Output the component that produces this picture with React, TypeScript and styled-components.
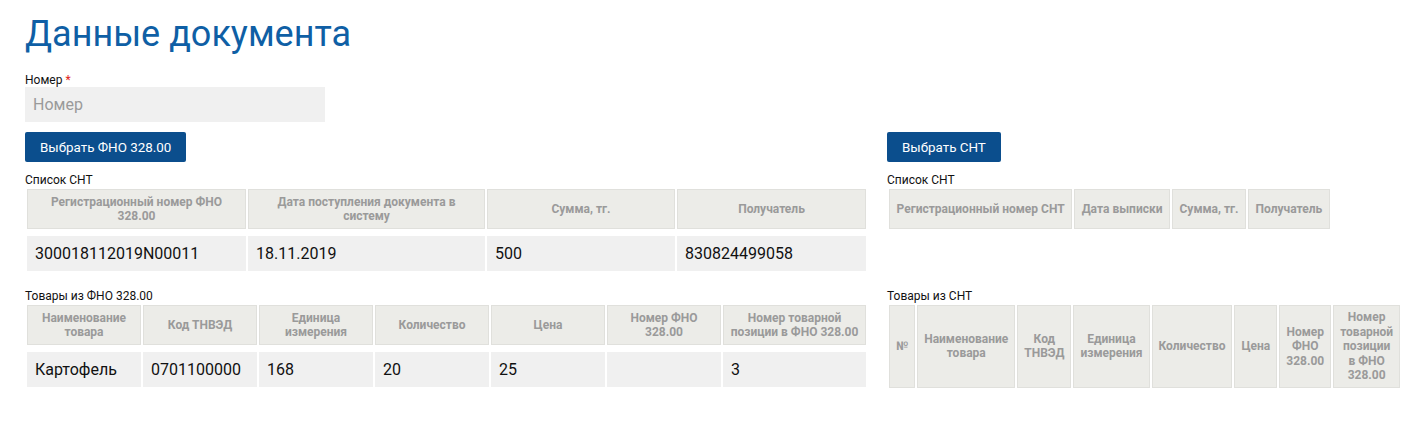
import React from "react";
import styled, { createGlobalStyle } from "styled-components";

const GlobalStyle = createGlobalStyle`
  html, body {
    margin: 0;
    padding: 0;
    background: #fff;
  }
  body {
    font-family: Roboto, "Liberation Sans", Arial, sans-serif;
    color: #000;
  }
`;

const Page = styled.div`
  padding: 13px 5px 20px 25px;
  width: 1410px;
  box-sizing: border-box;
`;

const Title = styled.h1`
  margin: 0 0 18px;
  font-size: 36px;
  font-weight: 400;
  line-height: 42px;
  color: #0f5fa5;
`;

const Label = styled.div`
  font-size: 12px;
  line-height: 14px;
  color: #111;
`;

const Required = styled.span`
  color: #e0231c;
`;

const TextInput = styled.input`
  display: block;
  width: 300px;
  height: 35px;
  box-sizing: border-box;
  border: none;
  outline: none;
  background: #f0f0f0;
  padding: 0 8px;
  font-family: inherit;
  font-size: 16px;
  color: #333;

  &::placeholder {
    color: #9a9a9a;
  }
`;

const Columns = styled.div`
  display: grid;
  grid-template-columns: 842px 518px;
  column-gap: 20px;
  row-gap: 16px;
  margin-top: 10px;
`;

const Section = styled.div`
  display: flex;
  flex-direction: column;
  align-items: flex-start;
`;

const Button = styled.button`
  height: 30px;
  padding: 0 15px;
  margin-bottom: 11px;
  border: none;
  border-radius: 2px;
  background: #0b4e8d;
  color: #fff;
  font-family: inherit;
  font-size: 13.4px;
  cursor: pointer;
`;

type Layout = "fixed" | "compact" | "nowrap";

const Table = styled.table<{ $layout: Layout; $width?: number }>`
  border-collapse: separate;
  border-spacing: 2px;
  table-layout: ${(p) => (p.$layout === "fixed" ? "fixed" : "auto")};
  width: ${(p) =>
    p.$layout === "fixed"
      ? `${p.$width}px`
      : p.$layout === "compact"
        ? "min-content"
        : "auto"};

  th {
    white-space: ${(p) => (p.$layout === "nowrap" ? "nowrap" : "normal")};
    padding-left: ${(p) => (p.$layout === "compact" ? "6px" : "6.5px")};
    padding-right: ${(p) => (p.$layout === "compact" ? "6px" : "6.5px")};
  }
`;

const Th = styled.th<{ $w?: number }>`
  width: ${(p) => (p.$w ? `${p.$w}px` : "auto")};
  height: 40px;
  box-sizing: border-box;
  padding-top: 4px;
  padding-bottom: 4px;
  background: #ecece8;
  border: 1px solid #e0e0dc;
  color: #9a9a9a;
  font-size: 12px;
  font-weight: 700;
  line-height: 14.5px;
  text-align: center;
  vertical-align: middle;
`;

const Td = styled.td`
  height: 40px;
  box-sizing: border-box;
  padding: 0 8px;
  border-top: 5px solid #fff;
  background: #f0f0f0;
  background-clip: padding-box;
  font-size: 16px;
  color: #111;
  vertical-align: middle;
`;

type Col = { title: string; w?: number };

const DataTable = ({
  cols,
  rows,
  layout,
  width,
}: {
  cols: Col[];
  rows?: string[][];
  layout: Layout;
  width?: number;
}) => (
  <Table $layout={layout} $width={width}>
    <thead>
      <tr>
        {cols.map((c) => (
          <Th key={c.title} $w={c.w}>
            {c.title}
          </Th>
        ))}
      </tr>
    </thead>
    {rows && (
      <tbody>
        {rows.map((r, i) => (
          <tr key={i}>
            {r.map((v, j) => (
              <Td key={j}>{v}</Td>
            ))}
          </tr>
        ))}
      </tbody>
    )}
  </Table>
);

const fnoList: Col[] = [
  { title: "Регистрационный номер ФНО 328.00", w: 219 },
  { title: "Дата поступления документа в систему", w: 237 },
  { title: "Сумма, тг.", w: 188 },
  { title: "Получатель", w: 189 },
];

const sntList: Col[] = [
  { title: "Регистрационный номер СНТ" },
  { title: "Дата выписки" },
  { title: "Сумма, тг." },
  { title: "Получатель" },
];

const fnoGoods: Col[] = [
  { title: "Наименование товара", w: 114 },
  { title: "Код ТНВЭД", w: 114 },
  { title: "Единица измерения", w: 114 },
  { title: "Количество", w: 114 },
  { title: "Цена", w: 114 },
  { title: "Номер ФНО 328.00", w: 114 },
  { title: "Номер товарной позиции в ФНО 328.00", w: 143 },
];

const sntGoods: Col[] = [
  { title: "№" },
  { title: "Наименование товара" },
  { title: "Код ТНВЭД" },
  { title: "Единица измерения" },
  { title: "Количество" },
  { title: "Цена" },
  { title: "Номер ФНО 328.00" },
  { title: "Номер товарной позиции в ФНО 328.00" },
];

export default function App() {
  return (
    <Page>
      <GlobalStyle />
      <Title>Данные документа</Title>
      <Label>
        Номер <Required>*</Required>
      </Label>
      <TextInput placeholder="Номер" />
      <Columns>
        <Section>
          <Button>Выбрать ФНО 328.00</Button>
          <Label>Список СНТ</Label>
          <DataTable
            layout="fixed"
            width={843}
            cols={fnoList}
            rows={[["300018112019N00011", "18.11.2019", "500", "830824499058"]]}
          />
        </Section>
        <Section>
          <Button>Выбрать СНТ</Button>
          <Label>Список СНТ</Label>
          <DataTable layout="nowrap" cols={sntList} />
        </Section>
        <Section>
          <Label>Товары из ФНО 328.00</Label>
          <DataTable
            layout="fixed"
            width={843}
            cols={fnoGoods}
            rows={[["Картофель", "0701100000", "168", "20", "25", "", "3"]]}
          />
        </Section>
        <Section>
          <Label>Товары из СНТ</Label>
          <DataTable layout="compact" cols={sntGoods} />
        </Section>
      </Columns>
    </Page>
  );
}
